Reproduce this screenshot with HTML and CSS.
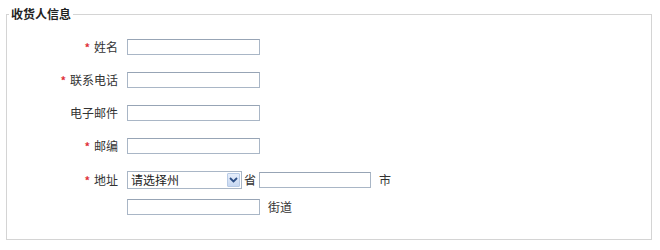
FILE: index.html
```html
<!DOCTYPE html>
<html lang="zh-CN">
<head>
  <meta charset="UTF-8">
  <title>收货人信息</title>
  <link rel="stylesheet" href="styles.css">
</head>
<body>
  <fieldset class="consignee">
    <legend>收货人信息</legend>
    <div class="form-grid">
      <label class="field-label"><span class="req">*</span>姓名</label>
      <div class="field"><input class="txt" type="text"></div>

      <label class="field-label"><span class="req">*</span>联系电话</label>
      <div class="field"><input class="txt" type="text"></div>

      <label class="field-label">电子邮件</label>
      <div class="field"><input class="txt" type="text"></div>

      <label class="field-label"><span class="req">*</span>邮编</label>
      <div class="field"><input class="txt" type="text"></div>

      <label class="field-label addr-label"><span class="req">*</span>地址</label>
      <div class="field addr">
        <div class="addr-line">
          <div class="select-wrap">
            <select class="province">
              <option>请选择州</option>
            </select>
            <span class="select-btn">
              <svg width="9" height="6" viewBox="0 0 9 6"><path d="M1 1 L4.5 4.5 L8 1" fill="none" stroke="#2d4f86" stroke-width="1.8"/></svg>
            </span>
          </div>
          <span class="unit">省</span>
          <input class="txt city" type="text">
          <span class="unit wide">市</span>
        </div>
        <div class="addr-line second">
          <input class="txt" type="text">
          <span class="unit wide">街道</span>
        </div>
      </div>
    </div>
  </fieldset>
</body>
</html>
```

FILE: styles.css
```css
html, body {
  margin: 0;
  padding: 0;
  background: #fff;
  color: #333;
  font-family: "Noto Sans CJK SC", "Liberation Sans", sans-serif;
  font-size: 12px;
}

.consignee {
  margin: 7px 0 0 6px;
  padding: 0 0 0 0;
  width: 644px;
  height: 231px;
  border: 1px solid #d4d4d4;
  box-sizing: content-box;
}
.consignee legend {
  margin-left: 2px;
  padding: 0 2px;
  font-weight: bold;
  font-size: 12px;
  line-height: 14px;
  color: #222;
}

.form-grid {
  display: grid;
  grid-template-columns: 111px auto;
  column-gap: 9px;
  row-gap: 17px;
  padding-top: 18px;
  align-items: start;
}
.field-label {
  display: block;
  height: 16px;
  text-align: right;
  line-height: 16px;
  color: #333;
  overflow: visible;
}
.addr-label {
  height: 18px;
  line-height: 18px;
}
.req {
  color: #e0313a;
  font-size: 11px;
  font-weight: bold;
  line-height: 0;
  margin-right: 4px;
}

.field {
  display: flex;
  align-items: center;
}
.txt {
  box-sizing: border-box;
  width: 133px;
  height: 16px;
  margin: 0;
  padding: 0 2px;
  border: 1px solid #a9b6c6;
  border-top-color: #97a4b5;
  background: #fff;
  font: inherit;
  outline: none;
}

.addr {
  flex-direction: column;
  align-items: flex-start;
  gap: 10px;
}
.addr-line {
  display: flex;
  align-items: center;
}
.select-wrap {
  position: relative;
  width: 115px;
  height: 18px;
}
.province {
  appearance: none;
  -webkit-appearance: none;
  box-sizing: border-box;
  width: 115px;
  height: 18px;
  margin: 0;
  padding: 0 0 0 3px;
  border: 1px solid #a9b6c6;
  border-radius: 0;
  background: #fff;
  font: inherit;
  color: #222;
  line-height: 16px;
  outline: none;
}
.select-btn {
  position: absolute;
  right: 2px;
  top: 2px;
  width: 13px;
  height: 14px;
  box-sizing: border-box;
  border: 1px solid #b8cbe6;
  border-radius: 1px;
  background: linear-gradient(#e6eefb, #c7d8f2);
  display: flex;
  align-items: center;
  justify-content: center;
}
.select-btn svg {
  display: block;
}
.unit {
  margin: 0 3px 0 2px;
  line-height: 16px;
}
.unit.wide {
  margin: 0 0 0 8px;
}
.city {
  width: 112px;
}
```
